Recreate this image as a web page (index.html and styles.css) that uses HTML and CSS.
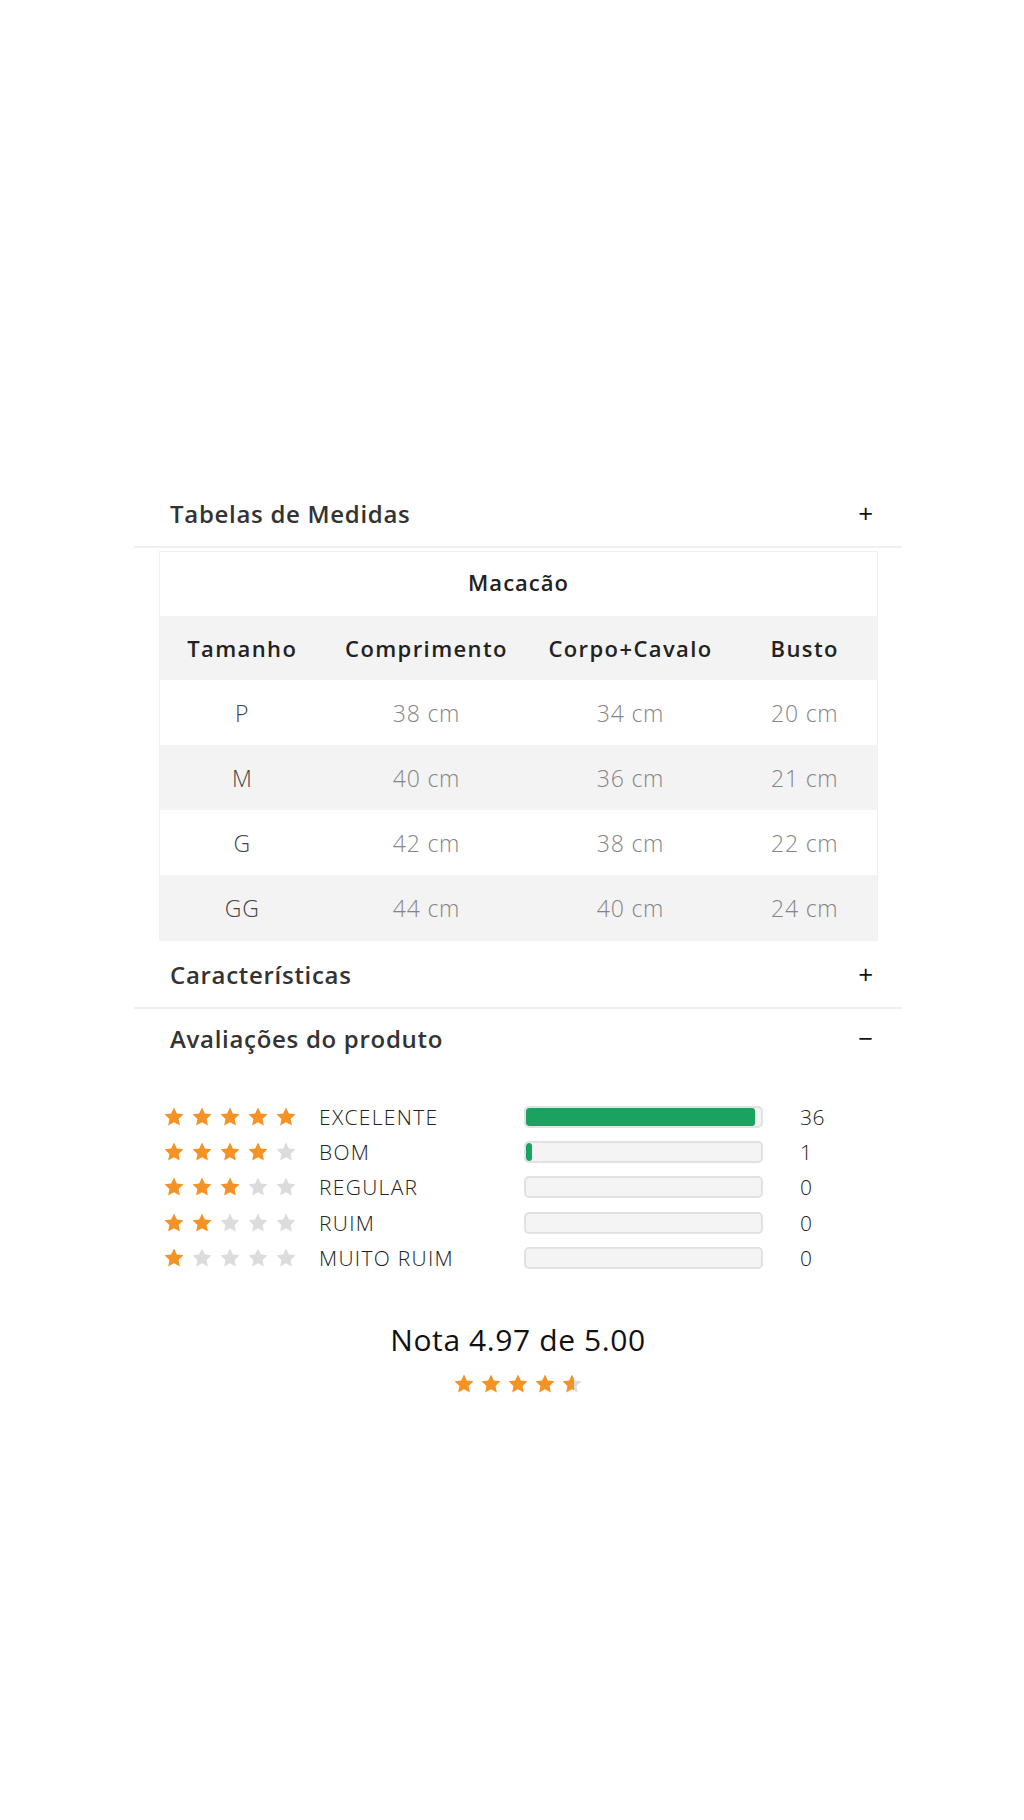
FILE: index.html
```html
<!DOCTYPE html>
<html lang="pt-BR">
<head>
<meta charset="utf-8">
<title>Produto</title>
<link rel="stylesheet" href="styles.css">
</head>
<body>
<svg class="defs" width="0" height="0" aria-hidden="true">
  <defs>
    <symbol id="star" viewBox="0 0 24 24">
      <path d="M12 1.6l3.1 6.6 7.2.9-5.3 5 1.4 7.1L12 17.7l-6.4 3.5 1.4-7.1-5.3-5 7.2-.9z"/>
    </symbol>
    <linearGradient id="partial" x1="0" x2="1" y1="0" y2="0">
      <stop offset="0.62" stop-color="#f39325"/>
      <stop offset="0.62" stop-color="#dcdcdc"/>
    </linearGradient>
  </defs>
</svg>

<main class="page">
  <section class="acc">
    <div class="acc-head">
      <span class="acc-title">Tabelas de Medidas</span>
      <span class="acc-icon">+</span>
    </div>
    <div class="acc-body">
      <table class="sizes">
        <colgroup>
          <col class="c1"><col class="c2"><col class="c3"><col class="c4">
        </colgroup>
        <thead>
          <tr class="cap"><th colspan="4">Macacão</th></tr>
          <tr class="hd"><th>Tamanho</th><th>Comprimento</th><th>Corpo+Cavalo</th><th>Busto</th></tr>
        </thead>
        <tbody>
          <tr><td class="sz">P</td><td>38 cm</td><td>34 cm</td><td>20 cm</td></tr>
          <tr class="alt"><td class="sz">M</td><td>40 cm</td><td>36 cm</td><td>21 cm</td></tr>
          <tr><td class="sz">G</td><td>42 cm</td><td>38 cm</td><td>22 cm</td></tr>
          <tr class="alt"><td class="sz">GG</td><td>44 cm</td><td>40 cm</td><td>24 cm</td></tr>
        </tbody>
      </table>
    </div>
  </section>

  <section class="acc">
    <div class="acc-head">
      <span class="acc-title">Características</span>
      <span class="acc-icon">+</span>
    </div>
  </section>

  <section class="acc open">
    <div class="acc-head">
      <span class="acc-title">Avaliações do produto</span>
      <span class="acc-icon minus">−</span>
    </div>
    <div class="reviews">
      <div class="rrow">
        <span class="stars"><svg class="on"><use href="#star"/></svg><svg class="on"><use href="#star"/></svg><svg class="on"><use href="#star"/></svg><svg class="on"><use href="#star"/></svg><svg class="on"><use href="#star"/></svg></span>
        <span class="rlabel">EXCELENTE</span>
        <span class="bar"><span class="fill" style="width:97.3%"></span></span>
        <span class="count">36</span>
      </div>
      <div class="rrow">
        <span class="stars"><svg class="on"><use href="#star"/></svg><svg class="on"><use href="#star"/></svg><svg class="on"><use href="#star"/></svg><svg class="on"><use href="#star"/></svg><svg class="off"><use href="#star"/></svg></span>
        <span class="rlabel">BOM</span>
        <span class="bar"><span class="fill" style="width:2.7%"></span></span>
        <span class="count">1</span>
      </div>
      <div class="rrow">
        <span class="stars"><svg class="on"><use href="#star"/></svg><svg class="on"><use href="#star"/></svg><svg class="on"><use href="#star"/></svg><svg class="off"><use href="#star"/></svg><svg class="off"><use href="#star"/></svg></span>
        <span class="rlabel">REGULAR</span>
        <span class="bar"></span>
        <span class="count">0</span>
      </div>
      <div class="rrow">
        <span class="stars"><svg class="on"><use href="#star"/></svg><svg class="on"><use href="#star"/></svg><svg class="off"><use href="#star"/></svg><svg class="off"><use href="#star"/></svg><svg class="off"><use href="#star"/></svg></span>
        <span class="rlabel">RUIM</span>
        <span class="bar"></span>
        <span class="count">0</span>
      </div>
      <div class="rrow">
        <span class="stars"><svg class="on"><use href="#star"/></svg><svg class="off"><use href="#star"/></svg><svg class="off"><use href="#star"/></svg><svg class="off"><use href="#star"/></svg><svg class="off"><use href="#star"/></svg></span>
        <span class="rlabel">MUITO RUIM</span>
        <span class="bar"></span>
        <span class="count">0</span>
      </div>

      <div class="summary">
        <p class="note">Nota 4.97 de 5.00</p>
        <span class="stars big"><svg class="on"><use href="#star"/></svg><svg class="on"><use href="#star"/></svg><svg class="on"><use href="#star"/></svg><svg class="on"><use href="#star"/></svg><svg class="part"><use href="#star"/></svg></span>
      </div>
    </div>
  </section>
</main>
</body>
</html>
```

FILE: styles.css
```css
html, body {
  margin: 0;
  padding: 0;
  background: #fff;
}
body {
  font-family: "Open Sans", "Noto Sans", "Liberation Sans", sans-serif;
  color: #333;
}
.defs {
  position: absolute;
  width: 0;
  height: 0;
  overflow: hidden;
}
.page {
  width: 768px;
  margin-left: 134px;
  padding-top: 480px;
}
.acc-head {
  display: flex;
  align-items: center;
  justify-content: space-between;
  padding: 0 29px 0 36px;
  border-bottom: 2px solid #efefef;
  box-sizing: border-box;
  height: 68px;
}
.acc.open .acc-head {
  border-bottom: none;
  height: 64px;
  padding-bottom: 6px;
}
.acc-title {
  font-size: 24px;
  font-weight: 600;
  color: #333;
  letter-spacing: 0.7px;
}
.acc-icon {
  font-size: 26px;
  font-weight: 400;
  color: #111;
  line-height: 1;
}
.acc-body {
  padding: 3px 25px 0;
}
.sizes {
  width: 718px;
  border-collapse: collapse;
  table-layout: fixed;
  border: 1px solid #f0f0f0;
}
.c1 { width: 165px; }
.c2 { width: 204px; }
.c3 { width: 204px; }
.c4 { width: 145px; }
.sizes th, .sizes td {
  height: 64px;
  padding: 0;
  text-align: center;
  vertical-align: middle;
}
.sizes .cap th {
  font-size: 22px;
  font-weight: 600;
  color: #222;
  background: #fff;
  letter-spacing: 1px;
  height: 60px;
  padding-bottom: 4px;
}
.sizes .hd th {
  background: #f3f3f3;
  font-size: 22px;
  font-weight: 600;
  color: #222;
  letter-spacing: 1.4px;
}
.sizes td {
  font-size: 23px;
  font-weight: 300;
  color: #858585;
  background: #fff;
  height: 65px;
  letter-spacing: 0.8px;
}
.sizes tr.alt td {
  background: #f3f3f3;
}
.sizes td.sz {
  color: #444;
}
.reviews {
  padding: 26px 0 0 29px;
}
.rrow {
  display: flex;
  align-items: center;
  height: 35.4px;
}
.stars {
  display: flex;
  gap: 6px;
  width: 156px;
}
.stars svg {
  width: 22px;
  height: 22px;
  display: block;
}
.stars svg.on { fill: #f39325; }
.stars svg.off { fill: #dcdcdc; }
.stars svg.part { fill: url(#partial); }
.rlabel {
  font-size: 21px;
  font-weight: 300;
  color: #222;
  width: 205px;
  letter-spacing: 1.3px;
}
.bar {
  display: block;
  width: 239px;
  height: 22px;
  background: #f4f4f4;
  border: 2px solid #e2e2e2;
  border-radius: 5px;
  box-sizing: border-box;
  overflow: hidden;
}
.fill {
  display: block;
  height: 100%;
  background: #1ba261;
  border-radius: 3px;
}
.count {
  margin-left: 37px;
  font-size: 21px;
  font-weight: 300;
  color: #222;
  letter-spacing: 0.6px;
}
.summary {
  display: flex;
  flex-direction: column;
  align-items: center;
  margin-left: -29px;
  padding-top: 46px;
}
.note {
  margin: 0;
  font-size: 30px;
  font-weight: 400;
  color: #111;
  line-height: 1.2;
  letter-spacing: 0.6px;
}
.stars.big {
  width: auto;
  gap: 5px;
  margin-top: 15px;
}
```
